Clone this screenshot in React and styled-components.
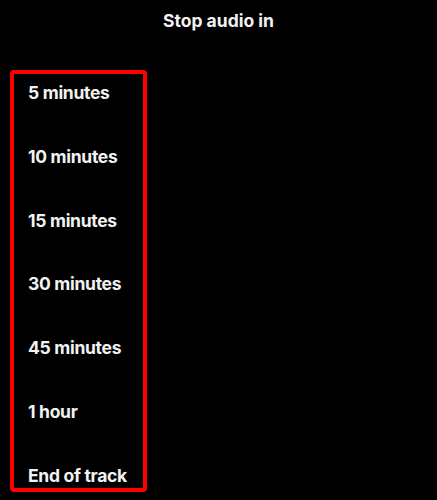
import React from 'react';
import styled, { createGlobalStyle } from 'styled-components';

const GlobalStyle = createGlobalStyle`
  html, body {
    margin: 0;
    padding: 0;
    background: #000;
  }
  body {
    font-family: Inter, Lato, 'Noto Sans', sans-serif;
    color: #fff;
  }
`;

const options = [
  '5 minutes',
  '10 minutes',
  '15 minutes',
  '30 minutes',
  '45 minutes',
  '1 hour',
  'End of track',
];

const Screen = styled.main`
  width: 437px;
  height: 500px;
  overflow: hidden;
  background: #000;
`;

const Title = styled.h1`
  margin: 0;
  padding-top: 11px;
  font-size: 17.5px;
  line-height: 20px;
  font-weight: 700;
  text-align: center;
  color: #f2f2f2;
`;

const Highlight = styled.ul`
  list-style: none;
  box-sizing: border-box;
  width: 137px;
  margin: 39px 0 0 10px;
  padding: 9px 0 2px 14px;
  border: 4px solid #ff0000;
  border-radius: 4px;
  display: flex;
  flex-direction: column;
  gap: 43.8px;
`;

const Option = styled.li`
  font-size: 17.5px;
  line-height: 20px;
  font-weight: 700;
  letter-spacing: -0.3px;
  color: #f2f2f2;
  white-space: nowrap;
`;

export default function App() {
  return (
    <Screen>
      <GlobalStyle />
      <Title>Stop audio in</Title>
      <Highlight>
        {options.map((label) => (
          <Option key={label}>{label}</Option>
        ))}
      </Highlight>
    </Screen>
  );
}
